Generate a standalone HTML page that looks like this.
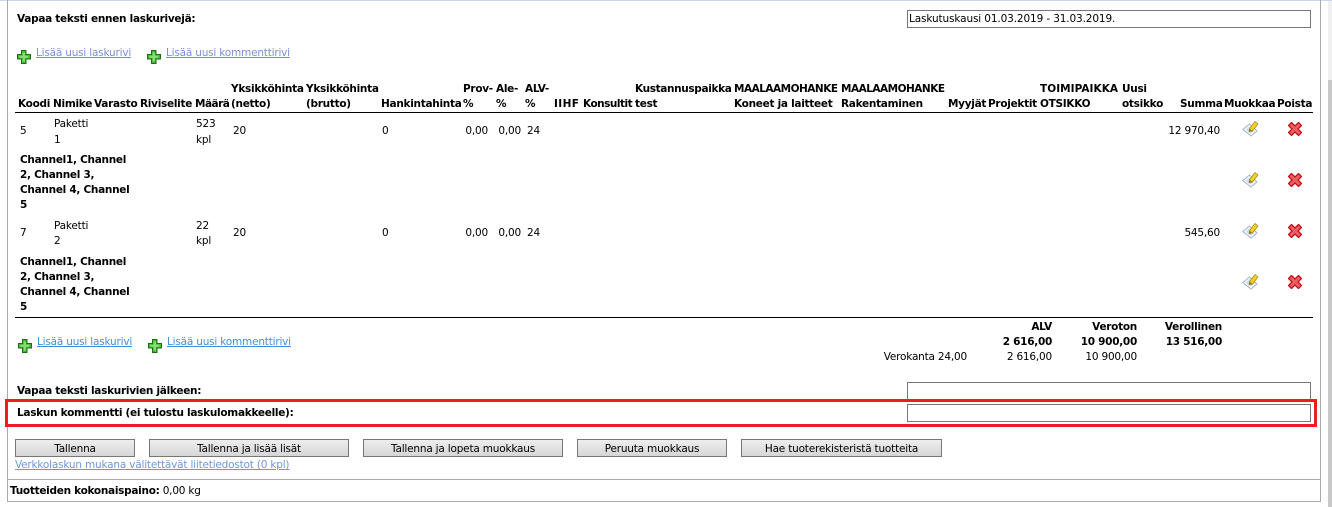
<!DOCTYPE html>
<html><head><meta charset="utf-8"><title>Lasku</title>
<style>
html,body{margin:0;padding:0;background:#fff;width:1332px;height:507px;overflow:hidden}
body{position:relative;font:10.5px/15px "DejaVu Sans","Liberation Sans",sans-serif;color:#000;letter-spacing:-.2px}
span,a,i{position:absolute;white-space:nowrap;font-style:normal}
span,a{margin-top:1px}
b,.b{font-weight:bold;color:#000;letter-spacing:-.28px}
a{color:#3f8fdc;text-decoration:underline}
a.v{color:#7b8fd6}
.r{text-align:right;transform:translateX(-100%)}
i{display:block}
.inp{border:1px solid #777;background:#fff;box-sizing:border-box;left:907px;width:404px;height:18px}
.btn{position:absolute;top:439px;height:18px;box-sizing:border-box;border:1px solid #777;background:linear-gradient(#eee,#d6d6d6);text-align:center;line-height:18px;color:#000}
svg{position:absolute}
</style></head><body>
<svg width="0" height="0" style="position:absolute"><defs>
<g id="plus"><path d="M4.500.5h4.500v4h4.500v4.500h-4.500v4.500H4.500V9h-4V4.500h4z" fill="#45b935" stroke="#1c7012"/><path d="M5.700 2.500h2.200v9H5.700zM2.300 5.700h9v2.200h-9z" fill="#86e076"/></g>
<g id="del"><path d="M3 1l3.500 3.500L10 1l3 3-3.500 3.500L13 11l-3 3-3.500-3.500L3 14l-3-3 3.500-3.500L0 4z" transform="translate(.5 -.5)" fill="#ee5f62" stroke="#c0111a" stroke-width="1.300"/></g>
<g id="edit"><path d="M.7 9.500l6.800-5.500 7.500 7-6 5z" fill="#f2f5fc" stroke="#a9b3c6"/><path d="M3.500 9.500l4-3.300 4.500 4.500-3.300 2.700z" fill="#c9e4ee"/><path d="M7.500 8.500L13 1.500l3 2.500-5.500 7-3.500 .8z" fill="#f4d020" stroke="#a8850e" stroke-width=".7"/><path d="M7 12l.5-3.500 3 2.500z" fill="#8a7a40"/></g>
</defs></svg>

<i style="left:0;top:0;width:1332px;height:1px;background:#c9d5e8"></i>
<i style="left:7px;top:0;width:1px;height:502px;background:#aaa"></i>
<i style="left:1320px;top:0;width:1px;height:502px;background:#aaa"></i>
<i style="left:7px;top:501px;width:1314px;height:1px;background:#aaa"></i>
<i style="left:7px;top:479px;width:1314px;height:1px;background:#aaa"></i>
<i style="left:1328px;top:1px;width:4px;height:79px;background:#f0f0f0"></i>
<i style="left:1328px;top:80px;width:4px;height:427px;background:#c8c8c8"></i>

<span class="b" style="left:17px;top:11px">Vapaa teksti ennen laskurivejä:</span>
<i class="inp" style="top:10px"></i>
<span style="left:909px;top:11px;letter-spacing:-.13px">Laskutuskausi 01.03.2019 - 31.03.2019.</span>

<svg style="left:17px;top:50px" width="14" height="14"><use href="#plus"/></svg>
<a class="v" style="left:36px;top:45px">Lisää uusi laskurivi</a>
<svg style="left:147px;top:50px" width="14" height="14"><use href="#plus"/></svg>
<a class="v" style="left:166px;top:45px">Lisää uusi kommenttirivi</a>

<span class="b" style="left:231px;top:81px">Yksikköhinta</span>
<span class="b" style="left:306px;top:81px">Yksikköhinta</span>
<span class="b" style="left:463px;top:81px">Prov-</span>
<span class="b" style="left:496px;top:81px">Ale-</span>
<span class="b" style="left:525px;top:81px">ALV-</span>
<span class="b" style="left:635px;top:81px;letter-spacing:-.35px">Kustannuspaikka</span>
<span class="b" style="left:734px;top:81px;letter-spacing:-.5px">MAALAAMOHANKE</span>
<span class="b" style="left:841px;top:81px;letter-spacing:-.5px">MAALAAMOHANKE</span>
<span class="b" style="left:1040px;top:81px;letter-spacing:.05px">TOIMIPAIKKA</span>
<span class="b" style="left:1122px;top:81px">Uusi</span>

<span class="b" style="left:18px;top:96px">Koodi</span>
<span class="b" style="left:53px;top:96px">Nimike</span>
<span class="b" style="left:94px;top:96px">Varasto</span>
<span class="b" style="left:140px;top:96px">Riviselite</span>
<span class="b" style="left:195px;top:96px;letter-spacing:-.5px">Määrä</span>
<span class="b" style="left:231px;top:96px">(netto)</span>
<span class="b" style="left:306px;top:96px">(brutto)</span>
<span class="b" style="left:381px;top:96px">Hankintahinta</span>
<span class="b" style="left:463px;top:96px">%</span>
<span class="b" style="left:496px;top:96px">%</span>
<span class="b" style="left:525px;top:96px">%</span>
<span class="b" style="left:554px;top:96px;letter-spacing:.4px">IIHF</span>
<span class="b" style="left:583px;top:96px;letter-spacing:-.5px">Konsultit</span>
<span class="b" style="left:635px;top:96px">test</span>
<span class="b" style="left:734px;top:96px">Koneet ja laitteet</span>
<span class="b" style="left:841px;top:96px">Rakentaminen</span>
<span class="b" style="left:948px;top:96px">Myyjät</span>
<span class="b" style="left:988px;top:96px">Projektit</span>
<span class="b" style="left:1040px;top:96px">OTSIKKO</span>
<span class="b" style="left:1122px;top:96px">otsikko</span>
<span class="b" style="left:1180px;top:96px">Summa</span>
<span class="b" style="left:1224px;top:96px">Muokkaa</span>
<span class="b" style="left:1277px;top:96px">Poista</span>
<i style="left:15px;top:112px;width:1298px;height:1px;background:#000"></i>

<span style="left:20px;top:123px">5</span>
<span style="left:54px;top:116px">Paketti</span>
<span style="left:54px;top:132px">1</span>
<span style="left:196px;top:116px">523</span>
<span style="left:196px;top:132px">kpl</span>
<span style="left:233px;top:123px">20</span>
<span style="left:382px;top:123px">0</span>
<span class="r" style="left:488px;top:123px">0,00</span>
<span class="r" style="left:521px;top:123px">0,00</span>
<span style="left:527px;top:123px">24</span>
<span class="r" style="left:1220px;top:123px">12 970,40</span>

<span class="b" style="left:20px;top:152px">Channel1, Channel</span>
<span class="b" style="left:20px;top:167px">2, Channel 3,</span>
<span class="b" style="left:20px;top:182px">Channel 4, Channel</span>
<span class="b" style="left:20px;top:197px">5</span>

<span style="left:20px;top:225px">7</span>
<span style="left:54px;top:218px">Paketti</span>
<span style="left:54px;top:233px">2</span>
<span style="left:196px;top:218px">22</span>
<span style="left:196px;top:233px">kpl</span>
<span style="left:233px;top:225px">20</span>
<span style="left:382px;top:225px">0</span>
<span class="r" style="left:488px;top:225px">0,00</span>
<span class="r" style="left:521px;top:225px">0,00</span>
<span style="left:527px;top:225px">24</span>
<span class="r" style="left:1220px;top:225px">545,60</span>

<span class="b" style="left:20px;top:254px">Channel1, Channel</span>
<span class="b" style="left:20px;top:269px">2, Channel 3,</span>
<span class="b" style="left:20px;top:284px">Channel 4, Channel</span>
<span class="b" style="left:20px;top:299px">5</span>

<svg style="left:1242px;top:120px" width="17" height="17"><use href="#edit"/></svg>
<svg style="left:1242px;top:171px" width="17" height="17"><use href="#edit"/></svg>
<svg style="left:1242px;top:222px" width="17" height="17"><use href="#edit"/></svg>
<svg style="left:1242px;top:273px" width="17" height="17"><use href="#edit"/></svg>
<svg style="left:1288px;top:122px" width="14" height="14"><use href="#del"/></svg>
<svg style="left:1288px;top:173px" width="14" height="14"><use href="#del"/></svg>
<svg style="left:1288px;top:224px" width="14" height="14"><use href="#del"/></svg>
<svg style="left:1288px;top:275px" width="14" height="14"><use href="#del"/></svg>

<i style="left:15px;top:317px;width:1298px;height:1px;background:#000"></i>

<svg style="left:18px;top:339px" width="14" height="14"><use href="#plus"/></svg>
<a style="left:37px;top:334px">Lisää uusi laskurivi</a>
<svg style="left:148px;top:339px" width="14" height="14"><use href="#plus"/></svg>
<a style="left:167px;top:334px">Lisää uusi kommenttirivi</a>

<span class="b r" style="left:1052px;top:319px">ALV</span>
<span class="b r" style="left:1137px;top:319px">Veroton</span>
<span class="b r" style="left:1222px;top:319px">Verollinen</span>
<span class="b r" style="left:1052px;top:334px">2 616,00</span>
<span class="b r" style="left:1137px;top:334px">10 900,00</span>
<span class="b r" style="left:1222px;top:334px">13 516,00</span>
<span class="r" style="left:967px;top:349px">Verokanta 24,00</span>
<span class="r" style="left:1052px;top:349px">2 616,00</span>
<span class="r" style="left:1137px;top:349px">10 900,00</span>

<span class="b" style="left:17px;top:383px">Vapaa teksti laskurivien jälkeen:</span>
<i class="inp" style="top:382px"></i>
<i style="left:5px;top:399px;width:1312px;height:28px;border:3px solid #ed1c24;box-sizing:border-box"></i>
<span class="b" style="left:17px;top:405px">Laskun kommentti (ei tulostu laskulomakkeelle):</span>
<i class="inp" style="top:404px"></i>

<div class="btn" style="left:15px;width:120px">Tallenna</div>
<div class="btn" style="left:149px;width:200px">Tallenna ja lisää lisät</div>
<div class="btn" style="left:363px;width:200px">Tallenna ja lopeta muokkaus</div>
<div class="btn" style="left:577px;width:150px">Peruuta muokkaus</div>
<div class="btn" style="left:741px;width:201px">Hae tuoterekisteristä tuotteita</div>

<a style="left:15px;top:457px;color:#6c98d8">Verkkolaskun mukana välitettävät liitetiedostot (0 kpl)</a>
<span style="left:10px;top:483px"><b>Tuotteiden kokonaispaino:</b> 0,00 kg</span>
</body></html>
